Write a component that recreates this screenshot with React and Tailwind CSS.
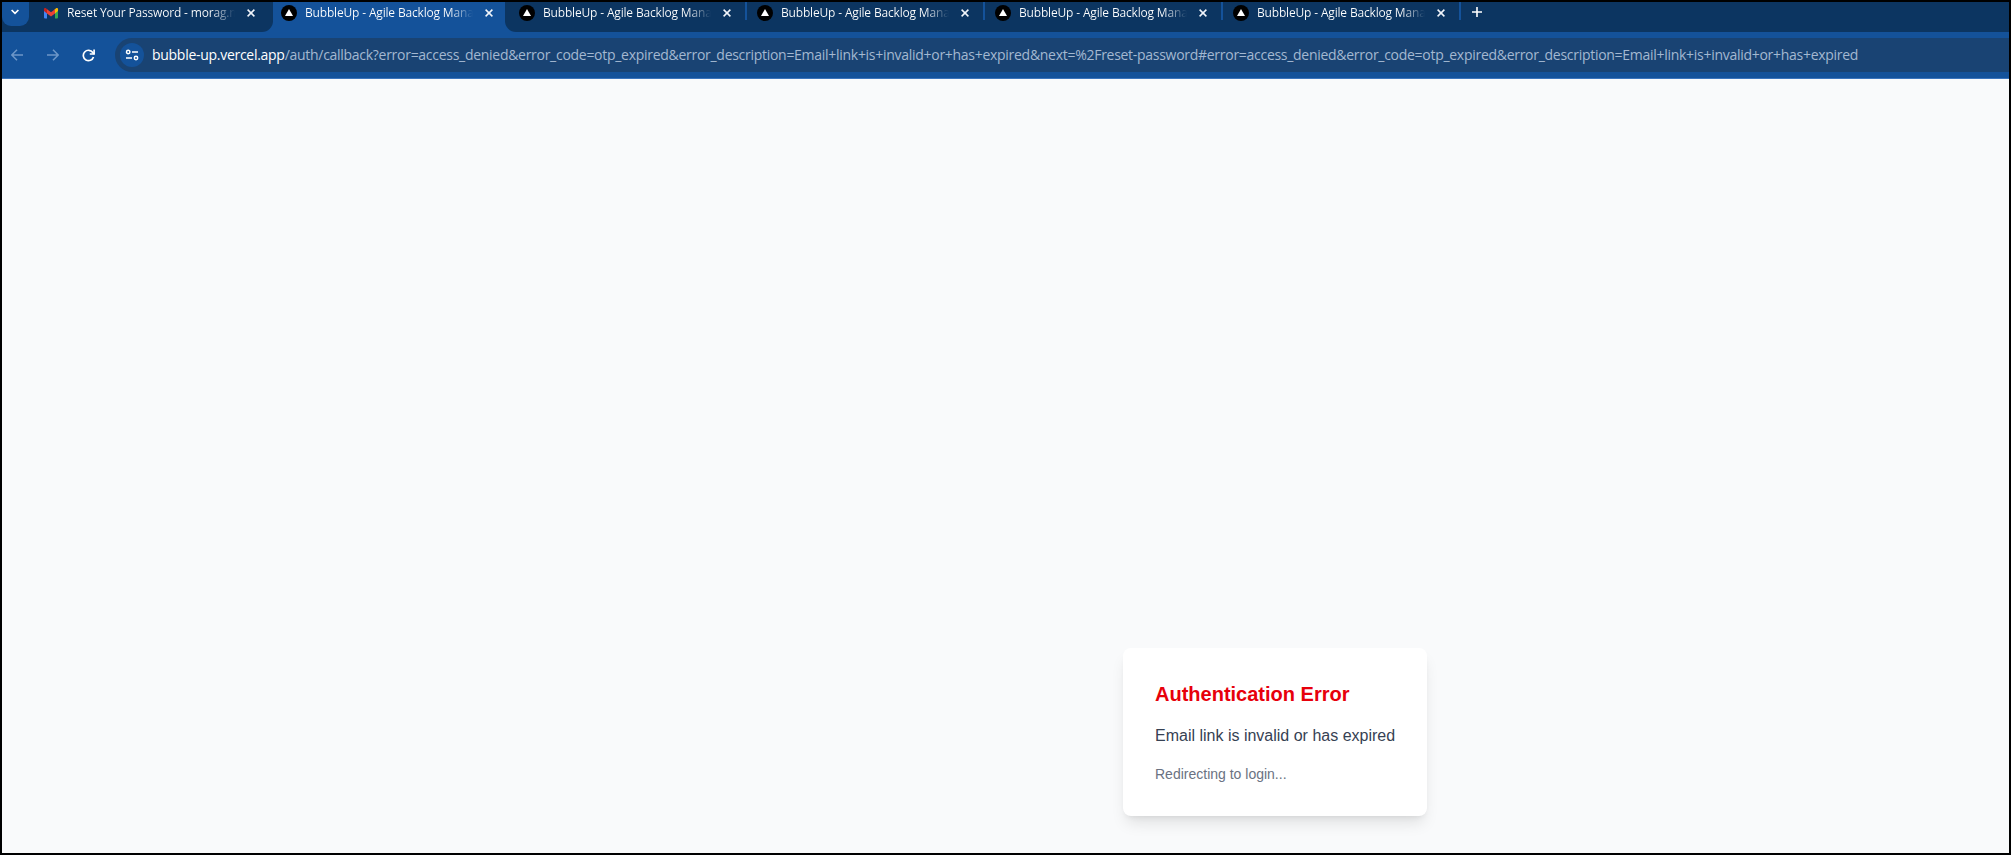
import React from "react";

function CloseIcon() {
  return (
    <svg width="8" height="8" viewBox="0 0 8 8" className="shrink-0" stroke="#f1f5fb" strokeWidth="1.5" fill="none">
      <path d="M0.6 0.6 7.4 7.4M7.4 0.6 0.6 7.4" />
    </svg>
  );
}

function AppMark() {
  return (
    <span className="flex size-4 shrink-0 items-center justify-center rounded-full bg-black">
      <svg width="16" height="16" viewBox="0 0 16 16">
        <path d="M8 4 12 11H4z" fill="#fff" />
      </svg>
    </span>
  );
}

function MailMark() {
  return (
    <svg width="16" height="16" viewBox="0 0 16 16" className="shrink-0">
      <path d="M1 5.5h3V13.500H2a1 1 0 0 1-1-1z" fill="#4285f4" />
      <path d="M12 5.5h3V12.500a1 1 0 0 1-1 1h-2z" fill="#34a853" />
      <path d="M12 4.2 13 3.3c1-.7 2 0 2 1V6l-3 2.4z" fill="#fbbc04" />
      <path d="M4 4.2 8 7.2l4-3v4.2L8 11.4 4 8.4z" fill="#ea4335" />
      <path d="M1 4.3c0-1 1-1.700 2-1l1 .9v4.200L1 6z" fill="#c5221f" />
    </svg>
  );
}

function Tab({ icon, title, divider }) {
  return (
    <div className="flex h-[22px] w-[238px] shrink-0 items-center">
      {icon}
      <span className="ml-2 w-[168px] shrink-0 whitespace-nowrap bg-linear-to-r from-white from-86% to-transparent to-100% bg-clip-text text-[12px] leading-5 tracking-[-0.17px] text-transparent">
        {title}
      </span>
      <span className="ml-[12px] flex">
        <CloseIcon />
      </span>
      {divider && <span className="ml-[14px] h-[18px] w-0.5 self-start bg-[#14529a]" />}
    </div>
  );
}

const backlog = "BubbleUp - Agile Backlog Mana";

export default function App() {
  return (
    <div className="flex h-[855px] w-[2011px] flex-col overflow-hidden border-2 border-black bg-[#f9fafb] font-['Open_Sans','Noto_Sans',sans-serif]">
      <div className="flex h-[30px] shrink-0 bg-[#14529a]">
        <div className="flex w-[271px] shrink-0 overflow-hidden rounded-br-[11px] bg-[#0c3561]">
          <div className="flex h-6 w-[27px] shrink-0 items-center justify-center rounded-b-[9px] bg-[#14529a] pr-px">
            <svg width="8" height="6" viewBox="0 0 8 6" className="-mt-1" fill="none" stroke="#fff" strokeWidth="1.7">
              <path d="M0.600 1 4 4.400 7.400 1" />
            </svg>
          </div>
          <div className="ml-[14px]">
            <Tab icon={<MailMark />} title="Reset Your Password - morag.m" />
          </div>
        </div>
        <div className="w-[232px] shrink-0 pl-2">
          <Tab icon={<AppMark />} title={backlog} />
        </div>
        <div className="flex grow rounded-bl-[11px] bg-[#0c3561] pl-[14px]">
          <Tab icon={<AppMark />} title={backlog} divider />
          <Tab icon={<AppMark />} title={backlog} divider />
          <Tab icon={<AppMark />} title={backlog} divider />
          <Tab icon={<AppMark />} title={backlog} divider />
          <svg width="10" height="10" viewBox="0 0 10 10" className="mt-[5px] ml-[1px]" stroke="#fff" strokeWidth="1.6">
            <path d="M5 0v10M0 5h10" />
          </svg>
        </div>
      </div>

      <div className="flex h-[47px] shrink-0 items-center border-b border-[#3a74bd] bg-[#14529a]">
        <div className="flex w-[113px] shrink-0 items-center pl-[9px]">
          <svg width="12" height="12" viewBox="0 0 12 12" fill="none" stroke="#6e97c8" strokeWidth="1.5">
            <path d="M12 6H1M6 .7.8 6 6 11.300" />
          </svg>
          <svg width="12" height="12" viewBox="0 0 12 12" className="ml-[24px]" fill="none" stroke="#6e97c8" strokeWidth="1.5">
            <path d="M0 6h11M6 .7 11.200 6 6 11.300" />
          </svg>
          <svg width="13" height="13" viewBox="0 0 13 13" className="ml-[23px]" fill="none" stroke="#fff" strokeWidth="1.700">
            <path d="M11.500 8A5.200 5.200 0 1 1 10.800 3.500L12 5" />
            <path d="M12.100.5V5H7.800" />
          </svg>
        </div>
        <div className="flex h-[34px] grow items-center rounded-l-full bg-[#194373] pl-[5px]">
          <span className="flex size-6 shrink-0 items-center justify-center rounded-full bg-[#14529a]">
            <svg width="14" height="12" viewBox="0 0 14 12" fill="none" stroke="#fff" strokeWidth="1.500">
              <circle cx="3.200" cy="3" r="1.700" />
              <path d="M7 3h6M1 9h6" />
              <circle cx="11" cy="9" r="1.700" />
            </svg>
          </span>
          <span className="ml-2 whitespace-nowrap text-[14px] leading-5 tracking-[-0.283px] text-[#a3b8d1]">
            <span className="text-white">bubble-up.vercel.app</span>
            /auth/callback?error=access_denied&amp;error_code=otp_expired&amp;error_description=Email+link+is+invalid+or+has+expired&amp;next=%2Freset-password#error=access_denied&amp;error_code=otp_expired&amp;error_description=Email+link+is+invalid+or+has+expired
          </span>
        </div>
      </div>

      <main className="flex grow items-end pb-[37px] pl-[1121px] font-['Liberation_Sans',Arial,sans-serif]">
        <div className="w-[304px] rounded-lg bg-white p-8 shadow-lg">
          <h1 className="mb-4 whitespace-nowrap text-xl font-bold text-[#e7000b]">Authentication Error</h1>
          <p className="whitespace-nowrap text-base text-[#364153]">Email link is invalid or has expired</p>
          <p className="mt-4 text-sm text-[#6a7282]">Redirecting to login...</p>
        </div>
      </main>
    </div>
  );
}
